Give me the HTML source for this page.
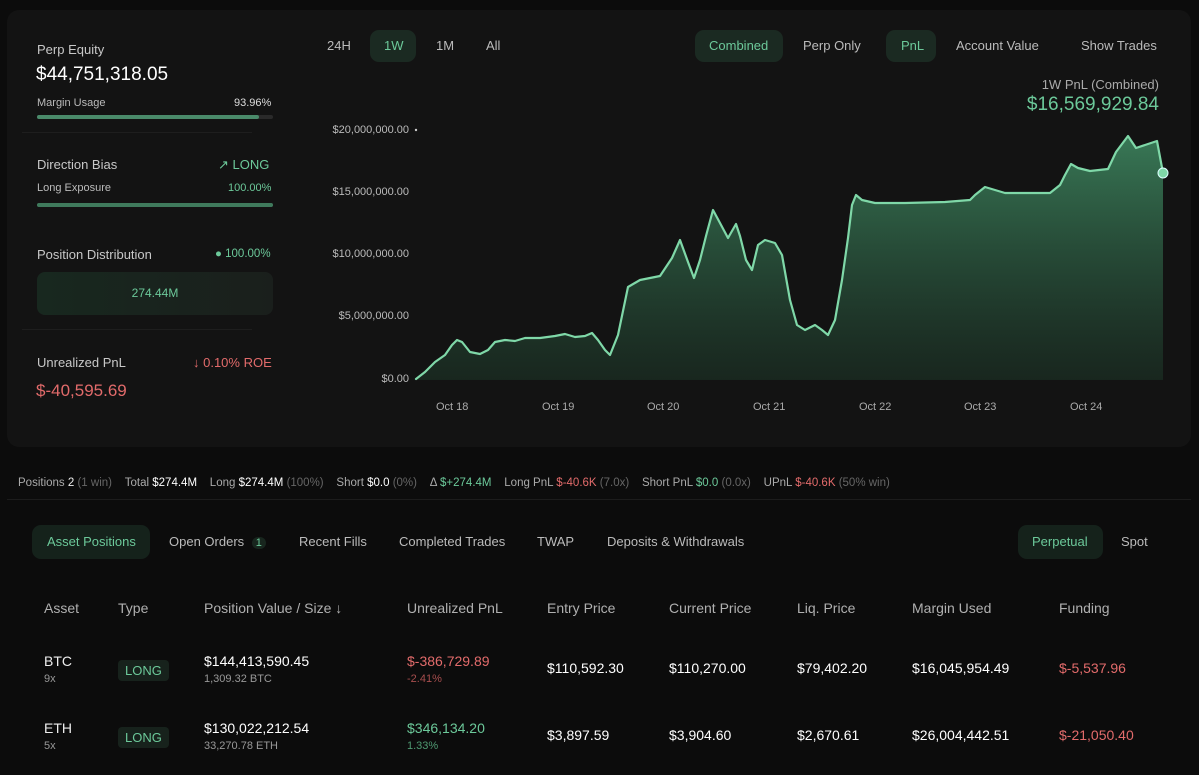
<!DOCTYPE html>
<html><head><meta charset="utf-8"><style>
*{box-sizing:border-box;margin:0;padding:0}
body{width:1199px;height:775px;overflow:hidden;background:#0c0c0c;font-family:"Liberation Sans",sans-serif;color:#d8d8d8;position:relative}
.a{position:absolute;white-space:nowrap}
.g{color:#6cc99a}.r{color:#e26b6b}.m{color:#9a9a9a}
.panel{position:absolute;left:7px;top:10px;width:1184px;height:437px;background:#131313;border-radius:12px}
.bar{position:absolute;height:4px;border-radius:2px;background:#2a2a2a}
.bar i{display:block;height:100%;border-radius:2px;background:#4a8a6a}
.btn{position:absolute;border-radius:9px;background:#1b2a22}
.pill{position:absolute;background:#17221c;border-radius:4px;color:#6cc99a;font-size:13px;padding:3px 7px}
</style></head><body>
<div class="panel"></div>
<div class="a" style="left:37px;top:42px;font-size:13px;color:#c8c8c8">Perp Equity</div>
<div class="a" style="left:36px;top:64px;font-size:19px;color:#fff">$44,751,318.05</div>
<div class="a" style="left:37px;top:97px;font-size:11px;color:#bbb">Margin Usage</div>
<div class="a" style="left:234px;top:97px;font-size:11px;color:#ddd">93.96%</div>
<div class="bar" style="left:37px;top:115px;width:236px"><i style="width:94%"></i></div>
<div class="a" style="left:22px;top:132px;width:230px;height:1px;background:#1e1e1e"></div>
<div class="a" style="left:37px;top:157px;font-size:13px;color:#c8c8c8">Direction Bias</div>
<div class="a g" style="left:218px;top:157px;font-size:13px">↗ LONG</div>
<div class="a" style="left:37px;top:182px;font-size:11px;color:#bbb">Long Exposure</div>
<div class="a g" style="left:228px;top:182px;font-size:11px">100.00%</div>
<div class="bar" style="left:37px;top:203px;width:236px"><i style="width:100%;background:#3f7a5c"></i></div>
<div class="a" style="left:37px;top:247px;font-size:13px;color:#c8c8c8">Position Distribution</div>
<div class="a g" style="left:215px;top:248px;font-size:11.5px">● 100.00%</div>
<div class="a" style="left:37px;top:272px;width:236px;height:43px;border-radius:8px;background:linear-gradient(90deg,#18281f,#1a1f1c);text-align:center;line-height:43px;font-size:12px;color:#6cc99a">274.44M</div>
<div class="a" style="left:22px;top:329px;width:230px;height:1px;background:#1e1e1e"></div>
<div class="a" style="left:37px;top:355px;font-size:13px;color:#c8c8c8">Unrealized PnL</div>
<div class="a r" style="left:193px;top:355px;font-size:13px">↓ 0.10% ROE</div>
<div class="a r" style="left:36px;top:381px;font-size:17px">$-40,595.69</div>
<div class="btn" style="left:370px;top:30px;width:46px;height:32px"></div>
<div class="a" style="left:327px;top:38px;font-size:13px;color:#bbb">24H</div>
<div class="a g" style="left:384px;top:38px;font-size:13px">1W</div>
<div class="a" style="left:436px;top:38px;font-size:13px;color:#bbb">1M</div>
<div class="a" style="left:486px;top:38px;font-size:13px;color:#bbb">All</div>
<div class="btn" style="left:695px;top:30px;width:88px;height:32px"></div>
<div class="btn" style="left:886px;top:30px;width:50px;height:32px"></div>
<div class="a g" style="left:709px;top:38px;font-size:13px">Combined</div>
<div class="a" style="left:803px;top:38px;font-size:13px;color:#bbb">Perp Only</div>
<div class="a g" style="left:901px;top:38px;font-size:13px">PnL</div>
<div class="a" style="left:956px;top:38px;font-size:13px;color:#bbb">Account Value</div>
<div class="a" style="left:1081px;top:38px;font-size:13px;color:#bbb">Show Trades</div>
<div class="a" style="right:40px;top:77px;font-size:13px;color:#aaa">1W PnL (Combined)</div>
<div class="a g" style="right:40px;top:94px;font-size:19px">$16,569,929.84</div>
<div class="a m" style="right:790px;top:124px;font-size:11px;color:#bbb">$20,000,000.00</div>
<div class="a m" style="right:790px;top:186px;font-size:11px;color:#bbb">$15,000,000.00</div>
<div class="a m" style="right:790px;top:248px;font-size:11px;color:#bbb">$10,000,000.00</div>
<div class="a m" style="right:790px;top:310px;font-size:11px;color:#bbb">$5,000,000.00</div>
<div class="a m" style="right:790px;top:373px;font-size:11px;color:#bbb">$0.00</div>
<div class="a" style="left:436px;top:401px;font-size:11px;color:#aaa">Oct 18</div>
<div class="a" style="left:542px;top:401px;font-size:11px;color:#aaa">Oct 19</div>
<div class="a" style="left:647px;top:401px;font-size:11px;color:#aaa">Oct 20</div>
<div class="a" style="left:753px;top:401px;font-size:11px;color:#aaa">Oct 21</div>
<div class="a" style="left:859px;top:401px;font-size:11px;color:#aaa">Oct 22</div>
<div class="a" style="left:964px;top:401px;font-size:11px;color:#aaa">Oct 23</div>
<div class="a" style="left:1070px;top:401px;font-size:11px;color:#aaa">Oct 24</div>
<svg class="a" style="left:0;top:0" width="1199" height="450">
<defs><linearGradient id="f" x1="0" y1="0" x2="0" y2="1"><stop offset="0" stop-color="#3f8a62" stop-opacity=".85"/><stop offset="1" stop-color="#1e3a2a" stop-opacity=".5"/></linearGradient></defs>
<path d="M416,379 L425,372 435,362 445,355 452,345 457,340 462,342 470,352 480,354 488,350 495,342 505,340 515,341 525,338 540,338 555,336 565,334 575,337 585,336 592,333 598,340 605,350 610,355 618,335 628,287 640,280 660,276 672,258 680,240 688,262 694,278 700,260 706,236 713,210 720,223 728,238 736,224 740,236 746,260 752,270 758,245 765,240 775,243 782,255 790,300 797,325 805,330 815,325 822,330 828,335 835,320 842,280 848,238 852,205 856,195 862,200 875,203 905,203 945,202 970,200 975,195 985,187 995,190 1005,193 1020,193 1050,193 1060,185 1065,175 1071,164 1078,168 1090,171 1108,169 1116,152 1128,136 1136,148 1145,145 1157,141 1163,173 L1163,380 L416,380Z" fill="url(#f)"/>
<path d="M416,379 L425,372 435,362 445,355 452,345 457,340 462,342 470,352 480,354 488,350 495,342 505,340 515,341 525,338 540,338 555,336 565,334 575,337 585,336 592,333 598,340 605,350 610,355 618,335 628,287 640,280 660,276 672,258 680,240 688,262 694,278 700,260 706,236 713,210 720,223 728,238 736,224 740,236 746,260 752,270 758,245 765,240 775,243 782,255 790,300 797,325 805,330 815,325 822,330 828,335 835,320 842,280 848,238 852,205 856,195 862,200 875,203 905,203 945,202 970,200 975,195 985,187 995,190 1005,193 1020,193 1050,193 1060,185 1065,175 1071,164 1078,168 1090,171 1108,169 1116,152 1128,136 1136,148 1145,145 1157,141 1163,173" fill="none" stroke="#7fd8a8" stroke-width="2.2" stroke-linejoin="round" stroke-linecap="round"/>
<circle cx="1163" cy="173" r="5" fill="#7fd8a8" stroke="#dff" stroke-width="1"/>
<circle cx="416" cy="130" r="1.2" fill="#ccc"/>
</svg>
<div class="a" style="left:18px;top:477px;font-size:11.5px;color:#aaa">Positions <b style="color:#eee;font-weight:normal">2</b> <span style="color:#666">(1 win)</span>&nbsp;&nbsp;&nbsp;&nbsp;Total <span style="color:#fff">$274.4M</span>&nbsp;&nbsp;&nbsp;&nbsp;Long <span style="color:#fff">$274.4M</span> <span style="color:#666">(100%)</span>&nbsp;&nbsp;&nbsp;&nbsp;Short <span style="color:#fff">$0.0</span> <span style="color:#666">(0%)</span>&nbsp;&nbsp;&nbsp;&nbsp;Δ <span class="g">$+274.4M</span>&nbsp;&nbsp;&nbsp;&nbsp;Long PnL <span class="r">$-40.6K</span> <span style="color:#666">(7.0x)</span>&nbsp;&nbsp;&nbsp;&nbsp;Short PnL <span class="g">$0.0</span> <span style="color:#666">(0.0x)</span>&nbsp;&nbsp;&nbsp;&nbsp;UPnL <span class="r">$-40.6K</span> <span style="color:#666">(50% win)</span></div>
<div class="a" style="left:7px;top:499px;width:1184px;height:1px;background:#1c1c1c"></div>
<div class="btn" style="left:32px;top:525px;width:118px;height:34px;background:#15221b"></div>
<div class="a g" style="left:47px;top:534px;font-size:13px">Asset Positions</div>
<div class="a" style="left:169px;top:534px;font-size:13px;color:#bbb">Open Orders <span style="display:inline-block;background:#18261e;color:#6cc99a;border-radius:6px;padding:0 4px;font-size:11px;margin-left:4px">1</span></div>
<div class="a" style="left:299px;top:534px;font-size:13px;color:#bbb">Recent Fills</div>
<div class="a" style="left:399px;top:534px;font-size:13px;color:#bbb">Completed Trades</div>
<div class="a" style="left:537px;top:534px;font-size:13px;color:#bbb">TWAP</div>
<div class="a" style="left:607px;top:534px;font-size:13px;color:#bbb">Deposits &amp; Withdrawals</div>
<div class="btn" style="left:1018px;top:525px;width:85px;height:34px;background:#15221b"></div>
<div class="a g" style="left:1032px;top:534px;font-size:13px">Perpetual</div>
<div class="a" style="left:1121px;top:534px;font-size:13px;color:#bbb">Spot</div>
<div class="a" style="top:600px;left:44px;font-size:14px;color:#b0b0b0">Asset</div>
<div class="a" style="top:600px;left:118px;font-size:14px;color:#b0b0b0">Type</div>
<div class="a" style="top:600px;left:204px;font-size:14px;color:#b0b0b0">Position Value / Size ↓</div>
<div class="a" style="top:600px;left:407px;font-size:14px;color:#b0b0b0">Unrealized PnL</div>
<div class="a" style="top:600px;left:547px;font-size:14px;color:#b0b0b0">Entry Price</div>
<div class="a" style="top:600px;left:669px;font-size:14px;color:#b0b0b0">Current Price</div>
<div class="a" style="top:600px;left:797px;font-size:14px;color:#b0b0b0">Liq. Price</div>
<div class="a" style="top:600px;left:912px;font-size:14px;color:#b0b0b0">Margin Used</div>
<div class="a" style="top:600px;left:1059px;font-size:14px;color:#b0b0b0">Funding</div>
<div class="a" style="top:653px;left:44px;font-size:14px;color:#eee">BTC</div>
<div class="a" style="top:673px;left:44px;font-size:11px;color:#999">9x</div>
<div class="pill" style="top:660px;left:118px">LONG</div>
<div class="a" style="top:653px;left:204px;font-size:14px;color:#fff">$144,413,590.45</div>
<div class="a" style="top:673px;left:204px;font-size:11px;color:#999">1,309.32 BTC</div>
<div class="a r" style="top:653px;left:407px;font-size:14px">$-386,729.89</div>
<div class="a" style="top:673px;left:407px;font-size:11px;color:#a84e4e">-2.41%</div>
<div class="a" style="top:660px;left:547px;font-size:14px;color:#fff">$110,592.30</div>
<div class="a" style="top:660px;left:669px;font-size:14px;color:#fff">$110,270.00</div>
<div class="a" style="top:660px;left:797px;font-size:14px;color:#fff">$79,402.20</div>
<div class="a" style="top:660px;left:912px;font-size:14px;color:#fff">$16,045,954.49</div>
<div class="a r" style="top:660px;left:1059px;font-size:14px">$-5,537.96</div>
<div class="a" style="top:720px;left:44px;font-size:14px;color:#eee">ETH</div>
<div class="a" style="top:740px;left:44px;font-size:11px;color:#999">5x</div>
<div class="pill" style="top:727px;left:118px">LONG</div>
<div class="a" style="top:720px;left:204px;font-size:14px;color:#fff">$130,022,212.54</div>
<div class="a" style="top:740px;left:204px;font-size:11px;color:#999">33,270.78 ETH</div>
<div class="a g" style="top:720px;left:407px;font-size:14px">$346,134.20</div>
<div class="a" style="top:740px;left:407px;font-size:11px;color:#4f9a72">1.33%</div>
<div class="a" style="top:727px;left:547px;font-size:14px;color:#fff">$3,897.59</div>
<div class="a" style="top:727px;left:669px;font-size:14px;color:#fff">$3,904.60</div>
<div class="a" style="top:727px;left:797px;font-size:14px;color:#fff">$2,670.61</div>
<div class="a" style="top:727px;left:912px;font-size:14px;color:#fff">$26,004,442.51</div>
<div class="a r" style="top:727px;left:1059px;font-size:14px">$-21,050.40</div>
</body></html>
